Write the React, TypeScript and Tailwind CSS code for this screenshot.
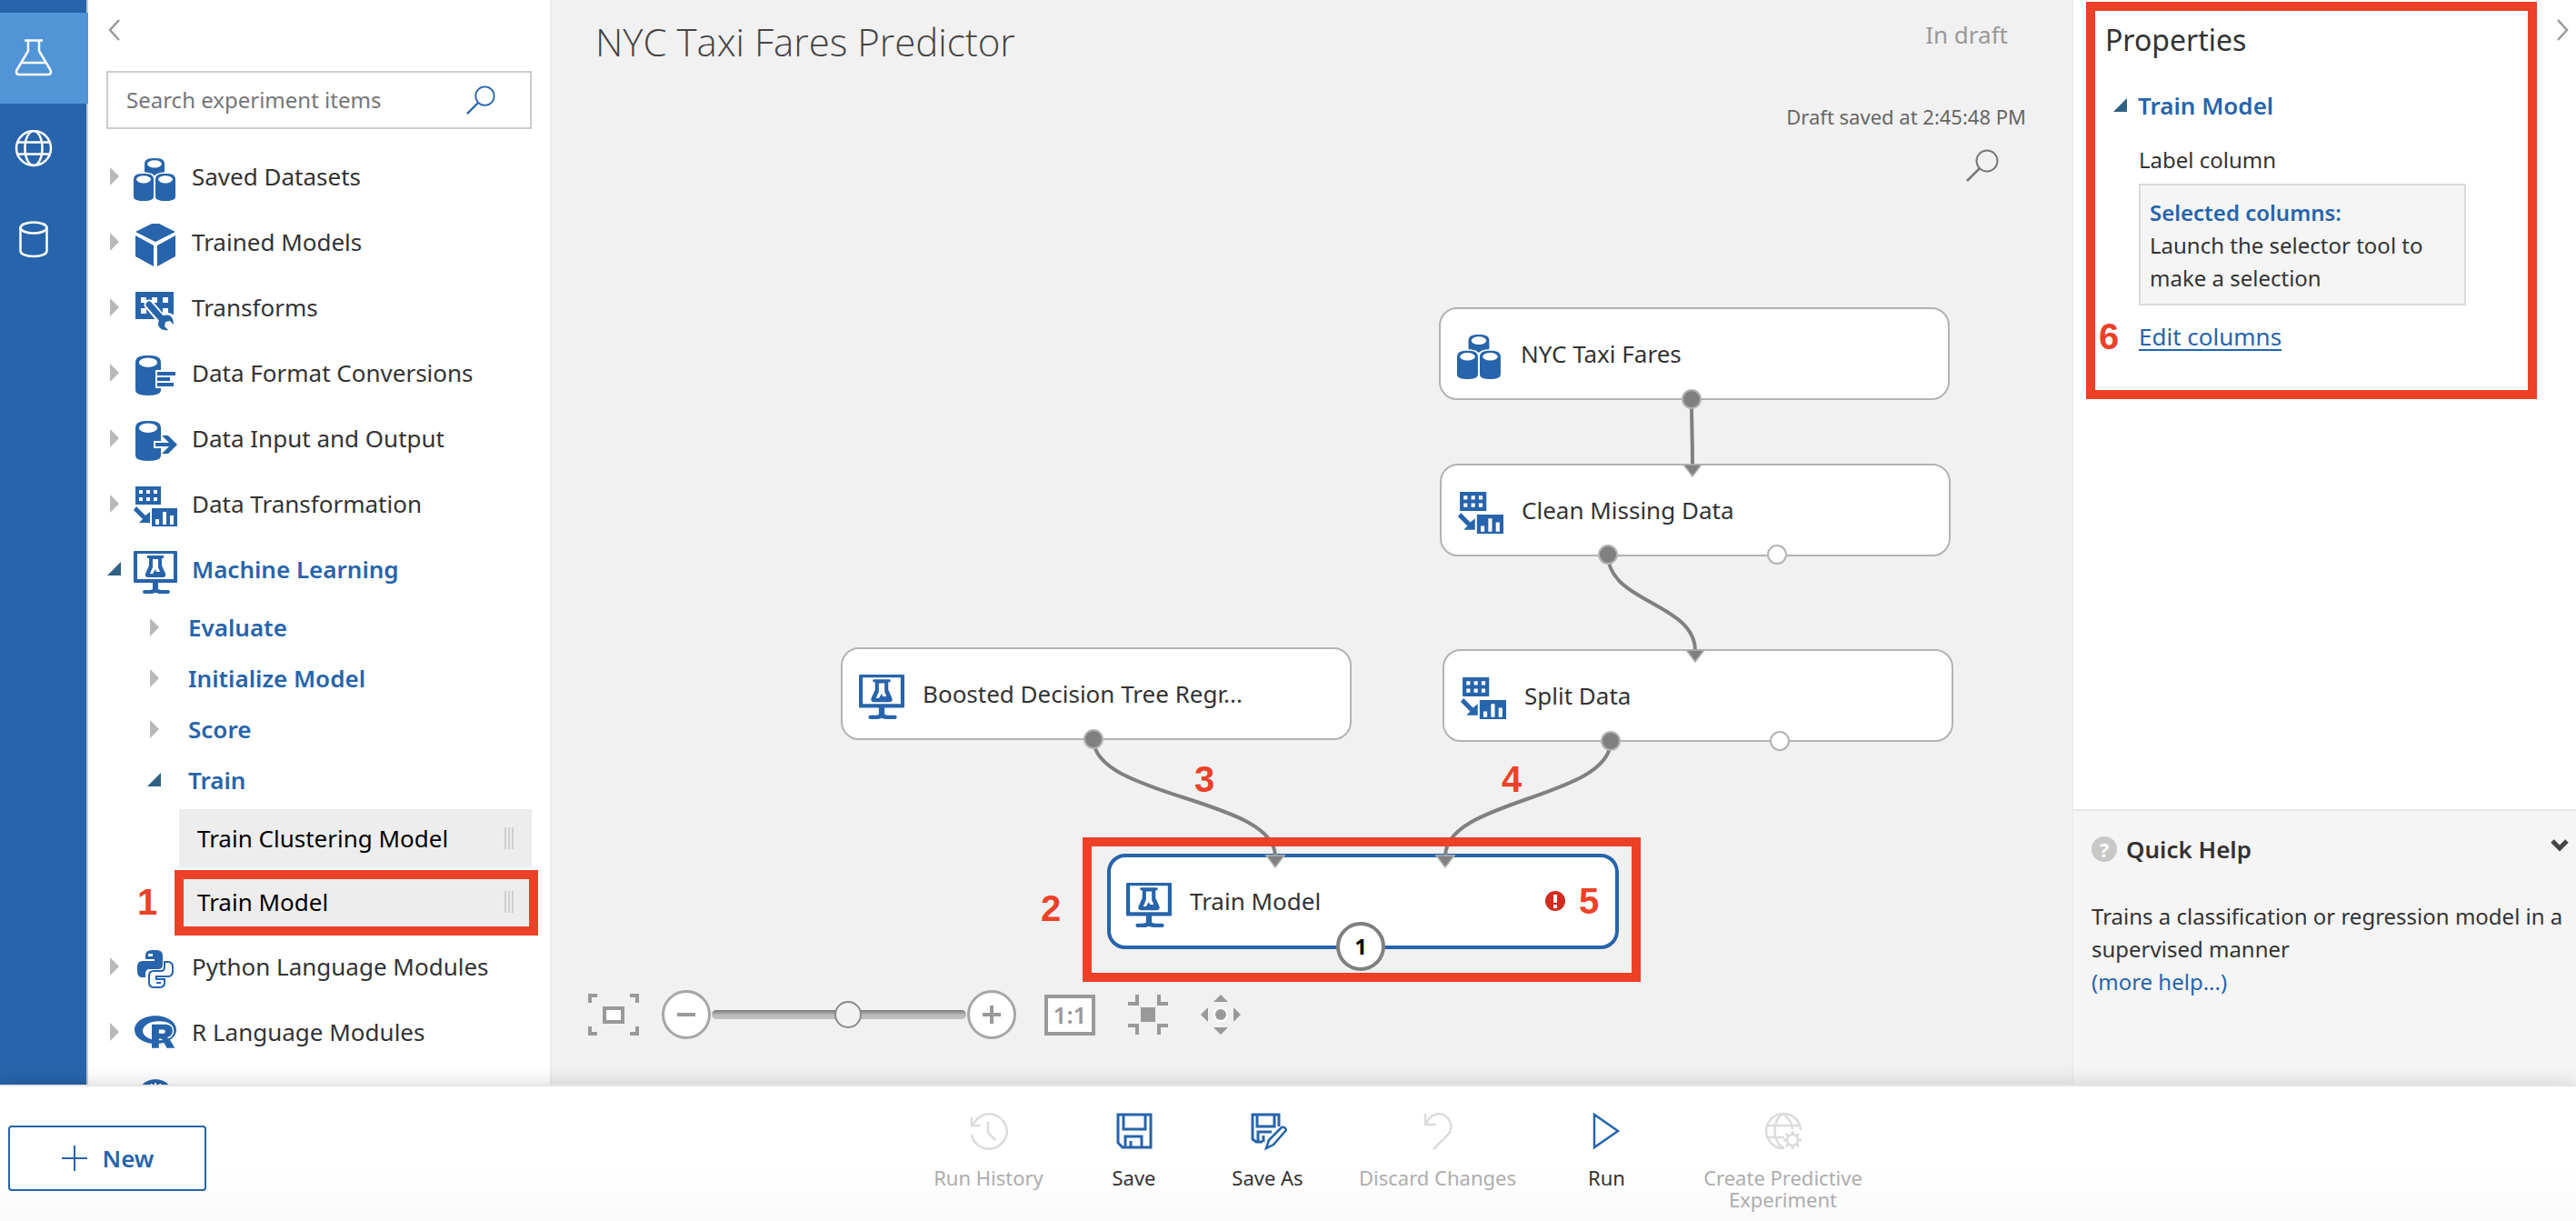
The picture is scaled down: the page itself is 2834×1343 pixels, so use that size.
import React from "react";
import { FaRProject } from "react-icons/fa6";

type IconProps = { className?: string };

const BLUE = "#2764ab";

function Svg({ children, className = "size-12" }: { children: React.ReactNode; className?: string }) {
  return (
    <svg viewBox="0 0 48 48" className={className} fill={BLUE} aria-hidden="true">
      {children}
    </svg>
  );
}

function Drum({ x, y, w, h }: { x: number; y: number; w: number; h: number }) {
  const r = w / 2;
  const k = w * 0.22;
  return (
    <>
      <path
        d={`M${x} ${y + k + 2}C${x} ${y + 1} ${x + r * 0.4} ${y} ${x + r} ${y}S${x + w} ${y + 1} ${x + w} ${y + k + 2}V${y + h - k}C${x + w} ${y + h - 1} ${x + r * 1.5} ${y + h} ${x + r} ${y + h}S${x} ${y + h - 1} ${x} ${y + h - k}Z`}
      />
      <ellipse cx={x + r} cy={y + k + 1.5} rx={r * 0.72} ry={k * 0.85} fill="#fff" />
    </>
  );
}

function DatasetsIcon({ className }: IconProps) {
  return (
    <Svg className={className}>
      <Drum x={12} y={0} w={22} h={19} />
      <path d="M-1 24C-1 17 4 15.500 11 15.500S22 17 23 20C24 17 28 15.500 35 15.500S47 17 47 24V30H-1Z" fill="#fff" />
      <Drum x={0} y={17} w={22} h={30} />
      <Drum x={24} y={17} w={22} h={30} />
    </Svg>
  );
}

function CubeIcon({ className }: IconProps) {
  return (
    <Svg className={className}>
      <path d="M20 0h8L46 9 24 20 2 9ZM2 13l20 11v23L2 36ZM46 13L26 24v23l20-11Z" />
    </Svg>
  );
}

function TransformsIcon({ className }: IconProps) {
  return (
    <Svg className={className}>
      <path d="M2 3h42v30H2Z" />
      <path d="M8 9h6v6H8ZM20 9h6v6h-6ZM32 9h6v6h-6ZM8 21h6v6H8ZM20 21h6v6h-6ZM32 21h6v6h-6Z" fill="#fff" />
      <path d="M17 17L35 38" stroke="#fff" strokeWidth="11" strokeLinecap="round" />
      <circle cx="37" cy="37" r="11" fill="#fff" />
      <path d="M17 17L32 34" stroke={BLUE} strokeWidth="7" strokeLinecap="round" />
      <path d="M30 31C33 28 38 28 41 30C43 32 44 35 44 39L40 35L35 36L34 41L38 45C32 46 28 43 27 39C27 36 28 33 30 31Z" />
    </Svg>
  );
}

function FormatIcon({ className }: IconProps) {
  return (
    <Svg className={className}>
      <Drum x={2} y={1} w={28} h={44} />
      <path d="M24 17h24v20H24Z" fill="#fff" />
      <path d="M26 19h20v4H26ZM26 25h14v4H26ZM26 31h18v4H26Z" />
    </Svg>
  );
}

function InputOutputIcon({ className }: IconProps) {
  return (
    <Svg className={className}>
      <Drum x={2} y={1} w={28} h={44} />
      <path d="M22 23h9v8h-9Z" fill="#fff" />
      <path d="M24 25h15L31 17h7l10 10-10 10h-7l8-8H24Z" />
    </Svg>
  );
}

function TransformationIcon({ className }: IconProps) {
  return (
    <Svg className={className}>
      <path d="M2 1h28v20H2ZM20 25h28v20H20ZM3 23L13 33l5-4v12H6l4-4L0 27Z" />
      <path
        d="M6 5h4v4H6ZM14 5h4v4h-4ZM22 5h4v4h-4ZM6 13h4v4H6ZM14 13h4v4h-4ZM22 13h4v4h-4ZM24 37h4v6h-4ZM32 29h4v14h-4ZM40 33h4v10h-4Z"
        fill="#fff"
      />
    </Svg>
  );
}

function LearningIcon({ className }: IconProps) {
  return (
    <Svg className={className}>
      <path fillRule="evenodd" d="M1 0h46q1 0 1 1v33q0 1-1 1H27v7q2 1 4 1h7q2 0 2 2t-2 2H29q-3 0-4-1h-2q-1 1-4 1h-7q-2 0-2-2t2-2h5q3 0 4-1v-7H1q-1 0-1-1V1q0-1 1-1ZM4 3v28h40V3Z" />
      <path d="M16 5h16q2 0 1 3h-2v8l4 9q1 4-3 4H16q-4 0-3-4l4-9V8h-2q-1-3 1-3Z" />
      <path d="M21 9h6v9l2 5h-4l-1-3-3 5h-3l3-7Z" fill="#fff" />
    </Svg>
  );
}

function PythonIcon({ className }: IconProps) {
  return (
    <Svg className={className}>
      <path d="M13 8q0-6 7-6h5q7 0 7 6v10q0 5-5 5H18q-5 0-5 5v4H9q-5 0-5-7v-5q0-6 6-6h13v-2H13Z" />
      <path d="M16 6h5v3h-5Z" fill="#fff" />
      <path
        d="M34 15h4q5 0 5 6v4q0 6-5 6H25v3h9v4q0 5-6 5h-5q-6 0-6-5v-8q0-5 5-5h8q4 0 4-5Z"
        fill="#fff"
        stroke={BLUE}
        strokeWidth="2"
      />
      <path d="M25 37h5v2h-5Z" />
    </Svg>
  );
}

function RIcon({ className = "size-12" }: IconProps) {
  return <FaRProject className={`${className} -mt-2 p-px text-[#2764ab]`} aria-hidden="true" />;
}

function GlobeSolidIcon({ className }: IconProps) {
  return (
    <Svg className={className}>
      <circle cx="24" cy="20" r="20" />
      <path d="M24 4v32M14 8Q8 20 14 32M34 8Q40 20 34 32M20 5Q14 20 20 35M29 5Q34 20 29 35" stroke="#fff" strokeWidth="2" fill="none" />
    </Svg>
  );
}

function Magnifier({ className }: IconProps) {
  return (
    <svg viewBox="0 0 36 36" className={className} fill="none" stroke="currentColor" strokeWidth="2" aria-hidden="true">
      <circle cx="23" cy="13" r="11.500" />
      <path d="M15 21L1 35" strokeWidth="2.500" />
    </svg>
  );
}

function Caret({ open = false }: { open?: boolean }) {
  return open ? (
    <svg viewBox="0 0 16 16" className="size-4 shrink-0" aria-hidden="true">
      <path d="M16 0v15H1Z" fill="#2f6182" />
    </svg>
  ) : (
    <svg viewBox="0 0 16 20" className="h-5 w-4 shrink-0" aria-hidden="true">
      <path d="M4 0l10 10L4 20Z" fill="#b8b8b8" />
    </svg>
  );
}

function Callout({ children, className }: { children: React.ReactNode; className: string }) {
  return (
    <span className={`absolute font-['Liberation_Sans',sans-serif] text-[40px] leading-[40px] font-bold text-[#ec4127] ${className}`}>
      {children}
    </span>
  );
}

function Rail() {
  const base = "flex h-[100px] w-[97px] items-center pl-4 text-white";
  return (
    <nav aria-label="Workspace" className="flex w-[97px] shrink-0 flex-col border-r-2 border-[#c8c8c8] bg-[#2764ab] pt-3.5">
      <button aria-label="Experiments" className={`${base} relative bg-[#5195d7]`}>
        <svg viewBox="0 0 42 42" className="size-[42px]" fill="none" stroke="currentColor" strokeWidth="2.500" strokeLinejoin="round">
          <path d="M11 1.500h20M15 2v11L2.500 34q-2 5 3 5h31q5 0 3-5L27 13V2M8 26h26" />
        </svg>
      </button>
      <button aria-label="Web services" className={base}>
        <svg viewBox="0 0 42 42" className="size-[42px]" fill="none" stroke="currentColor" strokeWidth="2.500">
          <circle cx="21" cy="20" r="19" />
          <ellipse cx="21" cy="20" rx="9.500" ry="19" />
          <path d="M4 13.500h34M4 26.500h34" />
        </svg>
      </button>
      <button aria-label="Datasets" className={base}>
        <svg viewBox="0 0 42 42" className="size-[42px]" fill="none" stroke="currentColor" strokeWidth="2.500">
          <ellipse cx="21" cy="7.500" rx="14.500" ry="6" />
          <path d="M6.500 7.500V33c0 3 5 6 14.500 6s14.500-3 14.500-6V7.500" />
        </svg>
      </button>
    </nav>
  );
}

const topItems = [
  { label: "Saved Datasets", Icon: DatasetsIcon },
  { label: "Trained Models", Icon: CubeIcon },
  { label: "Transforms", Icon: TransformsIcon },
  { label: "Data Format Conversions", Icon: FormatIcon },
  { label: "Data Input and Output", Icon: InputOutputIcon },
  { label: "Data Transformation", Icon: TransformationIcon },
  { label: "Machine Learning", Icon: LearningIcon, open: true },
];

const bottomItems = [
  { label: "Python Language Modules", Icon: PythonIcon },
  { label: "R Language Modules", Icon: RIcon },
  { label: "", Icon: GlobeSolidIcon },
];

function TreeRow({ label, Icon, open = false }: { label: string; Icon: React.ComponentType<IconProps>; open?: boolean }) {
  return (
    <button
      aria-label={label || "Web Service"}
      aria-expanded={open}
      className={`flex h-[72px] w-full shrink-0 items-center pl-5 text-left whitespace-nowrap ${open ? "font-semibold text-[#2764ab]" : "text-[#333]"}`}
    >
      <Caret open={open} />
      <span className="mt-2 mr-4 ml-3.5 shrink-0">
        <Icon className="size-12" />
      </span>
      {label}
    </button>
  );
}

function SubRow({ label, open = false }: { label: string; open?: boolean }) {
  return (
    <button aria-expanded={open} className="flex h-14 w-full shrink-0 items-center gap-[30px] pl-16 text-left font-semibold text-[#2764ab]">
      <Caret open={open} />
      {label}
    </button>
  );
}

function ModuleItem({ label }: { label: string }) {
  return (
    <button className="flex h-16 w-full items-center justify-between bg-[#ededed] pr-5 pl-5 text-left text-black">
      {label}
      <span className="flex gap-0.5" aria-hidden="true">
        <i className="h-6 w-0.5 bg-[#cfcfcf]" />
        <i className="h-6 w-0.5 bg-[#cfcfcf]" />
        <i className="h-6 w-0.5 bg-[#cfcfcf]" />
      </span>
    </button>
  );
}

function Sidebar() {
  return (
    <aside className="flex w-[510px] shrink-0 flex-col overflow-hidden border-r-2 border-[#ececec] bg-white text-[26px] leading-9">
      <div className="flex h-[78px] shrink-0 items-start pt-5 pl-5">
        <button aria-label="Collapse panel" className="text-[#999]">
          <svg viewBox="0 0 16 26" className="h-[26px] w-4" fill="none" stroke="currentColor" strokeWidth="2.500">
            <path d="M14 2L4 13l10 11" />
          </svg>
        </button>
      </div>
      <div className="mr-5 mb-4 ml-5 flex h-16 shrink-0 items-center border-2 border-[#ccc] pr-[38px] pl-5">
        <input
          type="search"
          aria-label="Search experiment items"
          placeholder="Search experiment items"
          className="min-w-0 flex-1 text-[24px] outline-none placeholder:text-[#767676]"
        />
        <Magnifier className="size-8 text-[#2764ab]" />
      </div>
      {topItems.map((item) => (
        <TreeRow key={item.label} {...item} />
      ))}
      <SubRow label="Evaluate" />
      <SubRow label="Initialize Model" />
      <SubRow label="Score" />
      <SubRow label="Train" open />
      <div className="mr-5 ml-[100px] flex shrink-0 flex-col gap-1.5 pt-1 pb-[3px]">
        <ModuleItem label="Train Clustering Model" />
        <div className="relative">
          <ModuleItem label="Train Model" />
          <div className="pointer-events-none absolute -top-[3px] -right-[7px] -bottom-[5px] -left-[5px] border-10 border-[#ec4127]" />
          <Callout className="top-3 -left-[46px]">1</Callout>
        </div>
      </div>
      {bottomItems.map((item) => (
        <TreeRow key={item.label} {...item} />
      ))}
    </aside>
  );
}

const nodes = [
  { label: "NYC Taxi Fares", Icon: DatasetsIcon, x: 976, y: 338 },
  { label: "Clean Missing Data", Icon: TransformationIcon, x: 977, y: 510 },
  { label: "Split Data", Icon: TransformationIcon, x: 980, y: 714 },
  { label: "Boosted Decision Tree Regr...", Icon: LearningIcon, x: 318, y: 712 },
];

const wires = [
  [1254, 439, 1255, 512],
  [1162, 610, 1258, 716],
  [596, 813, 796, 942],
  [1165, 815, 983, 942],
];

const outputs = [
  [1254, 439, "#808080"],
  [1162, 610, "#808080"],
  [1348, 610, "#fff"],
  [1165, 815, "#808080"],
  [1351, 815, "#fff"],
  [596, 813, "#808080"],
] as const;

function Graph() {
  return (
    <>
      {nodes.map(({ label, Icon, x, y }) => (
        <div
          key={label}
          style={{ left: x, top: y }}
          className="absolute flex h-[102px] w-[562px] items-center gap-5 rounded-[20px] border-2 border-[#b3b3b3] bg-white pl-[18px] text-[26px] text-[#333]"
        >
          <Icon className="mt-2 size-[50px] shrink-0" />
          <span className="whitespace-nowrap">{label}</span>
        </div>
      ))}
      <div className="absolute top-[939px] left-[611px] flex h-[105px] w-[563px] items-center gap-5 rounded-[20px] border-4 border-[#2764ab] bg-white pl-[17px] text-[26px] text-[#333]">
        <LearningIcon className="mt-2 size-[50px] shrink-0" />
        <span>Train Model</span>
      </div>
      <svg className="pointer-events-none absolute inset-0 size-full" aria-hidden="true">
        {wires.map(([x1, y1, x2, y2]) => {
          const mid = (y1 + y2) / 2;
          return (
            <g key={`${x1}-${y1}`}>
              <path d={`M${x1} ${y1}C${x1} ${mid} ${x2} ${mid} ${x2} ${y2}`} fill="none" stroke="#808080" strokeWidth="4" />
              <path d={`M${x2 - 10} ${y2 - 1}h20l-10 13Z`} fill="#808080" stroke="#b3b3b3" strokeWidth="1.500" />
            </g>
          );
        })}
        {outputs.map(([x, y, fill]) => (
          <circle key={`${x}-${y}`} cx={x} cy={y} r="10" fill={fill} stroke="#b3b3b3" strokeWidth="2" />
        ))}
        <circle cx="1104" cy="991" r="11" fill="#d22b20" />
        <path d="M1102 984h4v9h-4ZM1102 995h4v4h-4Z" fill="#fff" />
      </svg>
      <div className="absolute top-[1014px] left-[863px] flex size-[54px] items-center justify-center rounded-full border-4 border-[#808080] bg-white text-[24px] font-bold text-black">
        1
      </div>
      <div className="pointer-events-none absolute top-[921px] left-[584px] h-[159px] w-[614px] border-10 border-[#ec4127]" />
      <Callout className="top-[979px] left-[538px]">2</Callout>
      <Callout className="top-[837px] left-[707px]">3</Callout>
      <Callout className="top-[837px] left-[1045px]">4</Callout>
      <Callout className="top-[971px] left-[1130px]">5</Callout>
    </>
  );
}

function ZoomBar() {
  const round = "flex size-[54px] items-center justify-center rounded-full border-3 border-[#a6a6a6] bg-white text-[#999]";
  return (
    <div className="absolute bottom-[50px] left-10 flex items-center text-[#999]">
      <button aria-label="Zoom to selection" className="mr-[25px]">
        <svg viewBox="0 0 56 46" className="h-[46px] w-14" fill="none" stroke="currentColor" strokeWidth="4">
          <path d="M2 10V2h8M46 2h8v8M54 36v8h-8M10 44H2v-8" />
          <path d="M18 16h20v15H18Z" fill="#fff" />
        </svg>
      </button>
      <button aria-label="Zoom out" className={round}>
        <svg viewBox="0 0 24 24" className="size-6" stroke="currentColor" strokeWidth="4">
          <path d="M2 12h20" />
        </svg>
      </button>
      <input
        type="range"
        aria-label="Zoom level"
        defaultValue={54}
        className="mx-px h-[30px] w-[280px] appearance-none bg-transparent [&::-webkit-slider-runnable-track]:h-2.5 [&::-webkit-slider-runnable-track]:rounded-[5px] [&::-webkit-slider-runnable-track]:bg-linear-to-b [&::-webkit-slider-runnable-track]:from-[#777] [&::-webkit-slider-runnable-track]:via-[#b8b8b8] [&::-webkit-slider-runnable-track]:to-[#c0c0c0] [&::-webkit-slider-thumb]:-mt-2.5 [&::-webkit-slider-thumb]:size-[30px] [&::-webkit-slider-thumb]:appearance-none [&::-webkit-slider-thumb]:rounded-full [&::-webkit-slider-thumb]:border-2 [&::-webkit-slider-thumb]:border-[#8a8a8a] [&::-webkit-slider-thumb]:bg-[#f2f2f2]"
      />
      <button aria-label="Zoom in" className={round}>
        <svg viewBox="0 0 24 24" className="size-6" stroke="currentColor" strokeWidth="4">
          <path d="M2 12h20M12 2v20" />
        </svg>
      </button>
      <button
        aria-label="Actual size"
        className="ml-[31px] flex h-[45px] w-14 items-center justify-center border-4 border-[#999] bg-white text-[26px] leading-none font-semibold"
      >
        1:1
      </button>
      <button aria-label="Zoom to fit" className="ml-9">
        <svg viewBox="0 0 44 44" className="size-11" fill="none" stroke="currentColor" strokeWidth="4">
          <path d="M10 0v10H0M34 0v10h10M10 44V34H0M34 44V34h10" />
          <path d="M14 14h16v16H14Z" fill="currentColor" stroke="none" />
        </svg>
      </button>
      <button aria-label="Pan" className="ml-9">
        <svg viewBox="0 0 44 44" className="size-11" fill="currentColor">
          <path d="M22 0l8 8H14ZM22 44l8-8H14ZM0 22l8-8v16ZM44 22l-8-8v16Z" />
          <circle cx="22" cy="22" r="7" stroke="#fff" strokeWidth="2" />
        </svg>
      </button>
    </div>
  );
}

function Canvas() {
  return (
    <main className="relative min-w-0 flex-1 overflow-hidden bg-[#f1f1f1]">
      <header className="flex items-start justify-between pr-[50px] pl-12">
        <h1 className="pt-[18px] font-['Open_Sans',sans-serif] text-[42px] leading-[56px] font-light text-[#444]">NYC Taxi Fares Predictor</h1>
        <div className="flex flex-col items-end text-[#666]">
          <span className="mt-5 mr-5 text-[26px] leading-9 text-[#999]">In draft</span>
          <span className="mt-[54px] text-[22px] leading-9">Draft saved at 2:45:48 PM</span>
          <button aria-label="Search in experiment" className="mt-[18px] mr-[30px] text-[#777]">
            <Magnifier className="size-9" />
          </button>
        </div>
      </header>
      <Graph />
      <ZoomBar />
    </main>
  );
}

function Properties() {
  return (
    <aside className="flex w-[555px] shrink-0 flex-col border-l-2 border-[#ececec] bg-white text-[24px] leading-9 text-[#333]">
      <div className="flex flex-1 items-start justify-between pt-0.5 pr-2 pl-3.5">
        <section className="relative h-[437px] w-[496px] border-10 border-[#ec4127] pl-[11px]">
          <h2 className="pt-2.5 text-[32px] leading-[44px]">Properties</h2>
          <h3 className="mt-8 flex items-center gap-3 pl-2 text-[26px] font-semibold text-[#2764ab]">
            <Caret open />
            Train Model
          </h3>
          <div className="mt-6 mr-[68px] ml-[37px]">
            <p>Label column</p>
            <div className="mt-2 border-2 border-[#d9d9d9] bg-[#f5f5f5] px-2.5 pt-3 pb-2.5">
              <strong className="font-semibold text-[#2764ab]">Selected columns:</strong>
              <p>Launch the selector tool to make a selection</p>
            </div>
            <a href="#columns" className="mt-4 block text-[26px] text-[#2764ab] underline underline-offset-4">
              Edit columns
            </a>
          </div>
          <Callout className="top-[338px] left-1">6</Callout>
        </section>
        <button aria-label="Collapse properties" className="mt-[18px] text-[#999]">
          <svg viewBox="0 0 16 26" className="h-[26px] w-4" fill="none" stroke="currentColor" strokeWidth="2.500">
            <path d="M4 2l10 11L4 24" />
          </svg>
        </button>
      </div>
      <section className="h-[303px] border-t-2 border-[#e8e8e8] bg-[#f5f5f5] pt-6 pl-5">
        <div className="flex items-center pr-2 text-[26px]">
          <span className="mr-2.5 flex size-7 items-center justify-center rounded-full bg-[#c8c8c8] text-[22px] font-bold text-white" aria-hidden="true">
            ?
          </span>
          <h3 className="flex-1 font-semibold">Quick Help</h3>
          <button aria-label="Collapse quick help" className="-mt-2">
            <svg viewBox="0 0 20 14" className="h-3.5 w-5" fill="none" stroke="#444" strokeWidth="5">
              <path d="M2 2l8 8 8-8" />
            </svg>
          </button>
        </div>
        <p className="mt-[38px]">Trains a classification or regression model in a supervised manner</p>
        <a href="#help" className="text-[#2764ab]">
          (more help...)
        </a>
      </section>
    </aside>
  );
}

function ActionIcon({ children }: { children: React.ReactNode }) {
  return (
    <svg viewBox="0 0 42 42" className="size-[42px]" fill="none" stroke="currentColor" strokeWidth="2.500" aria-hidden="true">
      {children}
    </svg>
  );
}

const actions = [
  {
    label: "Run History",
    width: "w-40",
    off: true,
    icon: <path d="M2 6v9h9M3 15C8 4 20-1 30 4.500S44 22 38 31S22 43 13 39Q3 34 2 25M20 11v12l8 8" />,
  },
  {
    label: "Save",
    width: "w-40",
    icon: <path d="M3 3h36v36H8l-5-5ZM9 3v16h24V3M11 39V27h18v12M17 39v-7" strokeWidth="3" />,
  },
  {
    label: "Save As",
    width: "w-[134px]",
    icon: (
      <>
        <path d="M33 16V3H4v27l4 3h7M9 3v13h19V3M10 33V22h15M16 33v-7" strokeWidth="3" />
        <path d="M19 40l3-9 14-14q4-1 5 3L27 36Z" />
      </>
    ),
  },
  {
    label: "Discard Changes",
    width: "w-60",
    off: true,
    icon: <path d="M7 2v12h12M8 13C12 2 24-1 31 6s5 16-1 21L16 41" />,
  },
  { label: "Run", width: "w-[132px]", icon: <path d="M7 3v36l26-18Z" /> },
  {
    label: "Create Predictive Experiment",
    width: "w-64",
    off: true,
    icon: (
      <>
        <path d="M40 20A19 19 0 1 0 21 40M22 40C8 34 8 8 21 2M21 2C28 8 31 13 31 19M4 15h34M4 28h18" />
        <circle cx="31" cy="31" r="6" />
        <path d="M31 21v4M31 37v4M21 31h4M37 31h4M24 24l3 3M35 35l3 3M38 24l-3 3M27 35l-3 3" strokeWidth="3" />
      </>
    ),
  },
];

function Footer() {
  return (
    <footer className="relative flex h-[150px] shrink-0 items-start border-t-2 border-[#e6e6e6] bg-linear-to-b from-white from-60% to-[#fafafa] shadow-[0_-2px_20px_rgba(0,0,0,0.14)]">
      <button className="mt-[43px] ml-[9px] flex h-[72px] w-[218px] shrink-0 items-center justify-center gap-4 rounded-sm border-2 border-[#2764ab] bg-white text-[26px] font-semibold text-[#2764ab]">
        <svg viewBox="0 0 30 30" className="size-[30px]" stroke="currentColor" strokeWidth="2" aria-hidden="true">
          <path d="M1 15h28M15 1v28" />
        </svg>
        New
      </button>
      <div className="flex flex-1 justify-center pt-7 pl-9">
        {actions.map(({ label, width, off, icon }) => (
          <button
            key={label}
            disabled={off}
            className={`flex flex-col items-center gap-[18px] px-2 text-[22px] leading-6 ${width} ${off ? "text-[#adadad]" : "text-[#333]"}`}
          >
            <span className={off ? "text-[#dcdcdc]" : "text-[#2764ab]"}>
              <ActionIcon>{icon}</ActionIcon>
            </span>
            {label}
          </button>
        ))}
      </div>
    </footer>
  );
}

export default function App() {
  return (
    <div className="flex h-screen flex-col overflow-hidden bg-white font-['Noto_Sans','Open_Sans',sans-serif]">
      <div className="flex min-h-0 flex-1">
        <Rail />
        <Sidebar />
        <Canvas />
        <Properties />
      </div>
      <Footer />
    </div>
  );
}
